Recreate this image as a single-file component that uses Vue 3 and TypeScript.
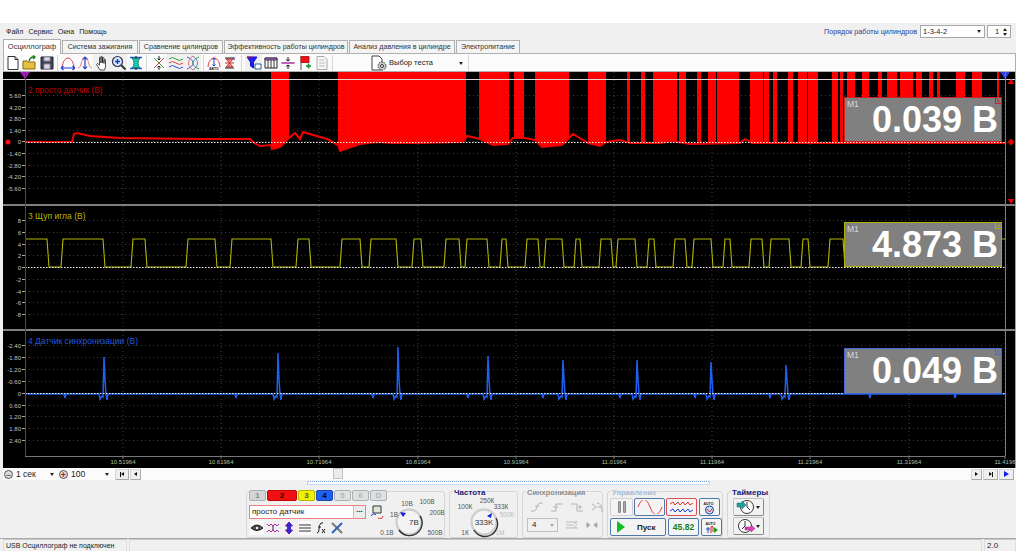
<template>
  <div class="app">
    <div class="topbar">
      <div class="menu">
        <span v-for="m in menuItems" :key="m">{{ m }}</span>
      </div>
      <div class="order">
        <span class="order-label">Порядок работы цилиндров</span>
        <div class="combo order-combo">1-3-4-2<i class="caret"></i></div>
        <div class="spin">1<span class="spin-arrows"><i class="up"></i><i class="caret"></i></span></div>
      </div>
    </div>

    <div class="tabs">
      <div
        v-for="(t, i) in tabs"
        :key="t.name"
        :class="['tab', { active: i === 0 }]"
        :style="{ width: t.w + 'px' }"
      >{{ t.name }}</div>
    </div>

    <div class="toolbar">
      <template v-for="(ic, i) in toolIcons" :key="i">
        <span v-if="ic.sep" class="tool-sep" :style="{ marginRight: (ic.gap ?? 1) + 'px' }"></span>
        <span v-else :class="['tool', { on: ic.on }]">
          <svg width="16" height="16" viewBox="0 0 16 16">
            <path v-for="(s, j) in ic.shapes" :key="j" :d="s[0]" :stroke="s[1]" :fill="s[2] ?? 'none'" :stroke-width="s[3] ?? 1" />
            <text v-if="ic.text" :x="ic.tx ?? 3" :y="ic.ty ?? 15" class="tool-text">{{ ic.text }}</text>
          </svg>
        </span>
      </template>
      <div class="test-select">
        <svg width="18" height="16" viewBox="0 0 18 16">
          <path d="M2 1h7l3 3v11H2z" fill="#fff" stroke="#444" />
          <circle cx="12" cy="11" r="4" fill="#ccc" stroke="#333" stroke-dasharray="1.5 1" />
          <circle cx="12" cy="11" r="1.5" fill="#fff" stroke="#333" />
        </svg>
        <span>Выбор теста</span>
        <i class="caret"></i>
      </div>
    </div>

    <div class="scope">
      <div v-for="p in panes" :key="p.title" class="pane" :style="{ height: p.h + 'px' }">
        <svg class="pane-svg" :width="1013" :height="p.h" :viewBox="`3 ${p.top} 1013 ${p.h}`">
          <g class="grid">
            <line v-for="v in gridX" :key="v" :x1="v" :x2="v" :y1="p.top" :y2="p.top + p.h" />
            <line v-for="t in p.ticks" :key="t.y" x1="25" x2="1005" :y1="t.y" :y2="t.y" />
          </g>
          <g v-if="p.id === 2">
            <path :d="burstPath" fill="#ff0000" />
            <path :d="curvePath" fill="none" stroke="#f00000" stroke-width="2" />
            <line x1="3" x2="1016" y1="79.5" y2="79.5" stroke="#d8d8d8" />
            <circle cx="8" cy="142" r="2.5" fill="#ff1010" />
            <path d="M1011 79l3.5 5h-7zM1011 138.5l3.5 3.5-3.5 3.5-3.5-3.5zM1011 204l3.5-5h-7z" fill="#e80000" />
            <path d="M20 72h10l-5 7z" fill="#9a20b0" />
            <path d="M1000 72h10l-5 7z" fill="#3040e0" />
          </g>
          <path v-if="p.id === 3" :d="yellowPath" fill="none" stroke="#b4b400" stroke-width="1.1" />
          <path v-if="p.id === 4" :d="bluePath" fill="none" stroke="#2060f0" stroke-width="1.5" />
          <line x1="25" x2="1005" :y1="p.zero + 0.5" :y2="p.zero + 0.5" class="zero" />
          <g class="ticks">
            <g v-for="t in p.ticks" :key="t.y">
              <line x1="22" x2="25" :y1="t.y" :y2="t.y" />
              <text x="21" :y="t.y + 2">{{ t.label }}</text>
            </g>
          </g>
          <text x="28" :y="p.top + p.titleY" :class="['pane-title', { short: p.id === 2 }]" :fill="p.titleColor">{{ p.title }}</text>
        </svg>
        <div class="readout" :style="{ borderColor: p.color, height: p.boxH + 'px' }">
          <span class="readout-tag">M1</span>
          <span class="readout-close" :style="{ borderColor: p.color, color: p.color }">×</span>
          <span class="readout-value">{{ p.value }}</span>
        </div>
      </div>
      <div class="cursor cursor-left"></div>
      <div class="cursor cursor-right"></div>
      <svg class="axis" width="1013" height="12" viewBox="3 456 1013 12">
        <line x1="25" x2="1005" y1="456.5" y2="456.5" stroke="#777" />
        <g v-for="(v, i) in gridX" :key="v">
          <line :x1="v" :x2="v" y1="456" y2="459" stroke="#777" />
          <text :x="v" y="464" class="axis-text">{{ timeLabels[i] }}</text>
        </g>
      </svg>
    </div>

    <div class="timerow">
      <div class="scale-left">
        <span class="round-btn">−</span>
        <div class="combo flat w1">1 сек<i class="caret"></i></div>
        <span class="round-btn red">+</span>
        <div class="combo flat w2">100<i class="caret"></i></div>
        <span class="nav"><b class="bar"></b><b class="tri-l"></b></span>
        <span class="nav sm"><b class="tri-l"></b></span>
      </div>
      <div class="thumb"></div>
      <div class="scale-right">
        <span class="nav sm"><b class="tri-r"></b></span>
        <span class="nav md"><b class="tri-r"></b><b class="bar"></b></span>
        <span class="nav md"><b class="tri-r blue"></b></span>
      </div>
    </div>

    <div class="controls">
      <div class="strip"><i></i></div>
      <div class="groups">
        <div class="group g-main">
          <div class="channel-col">
            <div class="channels">
              <span v-for="c in channels" :key="c.name" :class="['ch', c.cls]">{{ c.name }}</span>
            </div>
            <div class="input-row">
              <div class="name-input">просто датчик<span class="dots">...</span></div>
              <svg width="14" height="14" viewBox="0 0 14 14">
                <path d="M3 1h8v7H3z" fill="#dfe8d8" stroke="#333" />
                <path d="M1 11a3 3 0 0 1 5-1" stroke="#2040e0" fill="none" />
                <path d="M13 11a3 3 0 0 1-5 2" stroke="#e02020" fill="none" />
              </svg>
            </div>
            <div class="icon-row">
              <span v-for="(ic, i) in channelIcons" :key="i" :class="['mini', { on: ic.on }]">
                <svg width="14" height="14" viewBox="0 0 14 14">
                  <path v-for="(s, j) in ic.shapes" :key="j" :d="s[0]" :stroke="s[1]" :fill="s[2] ?? 'none'" :stroke-width="s[3] ?? 1" />
                </svg>
              </span>
            </div>
          </div>
          <svg class="dial" width="59" height="47" viewBox="386 490 59 47">
            <circle cx="408" cy="520" r="12.5" fill="#f4f4f4" stroke="#cfcfcf" stroke-width="2.4" />
            <path d="M398 528A12.5 12.5 0 0 0 419 514" fill="none" stroke="#333" stroke-width="1.4" />
            <path d="M399 510l6 1-3 4z" fill="#1020e0" />
            <text v-for="l in voltLabels" :key="l[0]" :x="l[1]" :y="l[2]" class="dial-text">{{ l[0] }}</text>
            <text x="413" y="523" class="dial-center">7В</text>
          </svg>
        </div>

        <div class="group g-freq">
          <span class="group-title navy">Частота</span>
          <svg class="dial" width="69" height="47" viewBox="449 490 69 47">
            <circle cx="483" cy="520" r="12.5" fill="#f4f4f4" stroke="#cfcfcf" stroke-width="2.4" />
            <path d="M473 528A12.5 12.5 0 0 0 495 516" fill="none" stroke="#333" stroke-width="1.4" />
            <path d="M491 511l-5 3 4 2z" fill="#1020e0" />
            <text v-for="l in freqLabels" :key="l[0]" :x="l[1]" :y="l[2]" :class="['dial-text', { dim: l[3] }]">{{ l[0] }}</text>
            <text x="483" y="523" class="dial-center">333K</text>
          </svg>
        </div>

        <div class="group g-sync">
          <span class="group-title gray">Синхронизация</span>
          <div class="sync-grid">
            <svg v-for="(d, i) in syncTop" :key="i" width="14" height="12" viewBox="0 0 14 12">
              <path :d="d" stroke="#b4b4b4" fill="none" />
            </svg>
          </div>
          <div class="sync-row">
            <div class="combo sync-combo">4<i class="caret light"></i></div>
            <svg width="14" height="12" viewBox="0 0 14 12"><path d="M1 3h12M1 6h8M1 9h12M9 3l3 3-3 3" stroke="#bbb" fill="none" /></svg>
            <svg width="14" height="12" viewBox="0 0 14 12"><path d="M1 6h4M9 6h4M5 6l-3-2.5v5zM9 6l3-2.5v5z" stroke="#aaa" fill="#aaa" /></svg>
          </div>
        </div>

        <div class="group g-control">
          <span class="group-title pale">Управление</span>
          <div class="control-grid">
            <span class="cbtn w-pause"><i class="pause"></i><i class="pause"></i></span>
            <span class="cbtn w-mid blue-b">
              <svg width="26" height="14" viewBox="0 0 26 14"><path d="M1 7C5 -3 9 -3 13 7S21 17 25 7" fill="none" stroke="#e03030" /></svg>
            </span>
            <span class="cbtn w-mid red-b">
              <svg width="26" height="14" viewBox="0 0 26 14">
                <path d="M1 4l3-2 2 3 3-3 2 3 3-3 2 3 3-3 2 3 3-2" fill="none" stroke="#e03030" />
                <path d="M1 11l3-2 2 3 3-3 2 3 3-3 2 3 3-3 2 3 3-2" fill="none" stroke="#2040e0" />
              </svg>
            </span>
            <span class="cbtn w-small blue-b">
              <svg width="15" height="15" viewBox="0 0 15 15">
                <text x="1.5" y="4.5" class="tool-text">AUTO</text>
                <circle cx="7.5" cy="10" r="4" fill="#cfe0f0" stroke="#2040a0" />
                <path d="M5 9l2.5 3 2.5-3" stroke="#d02020" fill="none" />
              </svg>
            </span>
            <span class="cbtn w-run blue-b">
              <i class="play"></i><b class="run-label">Пуск</b>
            </span>
            <span class="cbtn w-mid blue-b"><b class="fps">45.82</b></span>
            <span class="cbtn w-small blue-b">
              <svg width="15" height="15" viewBox="0 0 15 15">
                <text x="1.5" y="4.5" class="tool-text">AUTO</text>
                <path d="M2 9h4M4 7v6" stroke="#2040e0" />
                <path d="M7 13V7q2-2 2 1v4" stroke="#d02020" fill="none" />
                <path d="M10 7l4 3-4 3z" fill="#20a020" />
              </svg>
            </span>
          </div>
        </div>

        <div class="group g-timers">
          <span class="group-title navy">Таймеры</span>
          <span class="timer-btn">
            <svg width="20" height="16" viewBox="0 0 20 16">
              <circle cx="11" cy="8" r="6.5" fill="#fff" stroke="#333" />
              <path d="M11 3v5l3 3" stroke="#333" fill="none" />
              <path d="M1 4h5V2l4 4-4 4V8H1z" fill="#20a0a0" stroke="#106060" stroke-width=".5" />
            </svg>
            <i class="caret"></i>
          </span>
          <span class="timer-btn">
            <svg width="20" height="16" viewBox="0 0 20 16">
              <circle cx="9" cy="8" r="6.5" fill="#fff" stroke="#333" />
              <path d="M9 3v5l-3 3" stroke="#333" fill="none" />
              <path d="M9 9h6V7l4 3.5-4 3.5v-2H9z" fill="#e040c0" stroke="#802070" stroke-width=".5" />
            </svg>
            <i class="caret"></i>
          </span>
        </div>
      </div>
    </div>

    <div class="status">
      <div class="cell c1">USB Осциллограф не подключен</div>
      <div class="cell c2"></div>
      <div class="cell c3">2.0</div>
    </div>
  </div>
</template>

<script setup lang="ts">
import { computed } from 'vue'

type Shape = [string, string, string?, number?]
interface Ico {
  sep?: boolean
  gap?: number
  on?: boolean
  shapes?: Shape[]
  text?: string
  tx?: number
  ty?: number
}

const menuItems = ['Файл', 'Сервис', 'Окна', 'Помощь']

const tabs = [
  { name: 'Осциллограф', w: 58 },
  { name: 'Система зажигания', w: 76 },
  { name: 'Сравнение цилиндров', w: 84 },
  { name: 'Эффективность работы цилиндров', w: 124 },
  { name: 'Анализ давления в цилиндре', w: 106 },
  { name: 'Электропитание', w: 64 }
]

const toolIcons: Ico[] = [
  { shapes: [['M3 1.5h7l3 3v10H3z', '#333', '#fff'], ['M10 1.5v3h3', '#333']] },
  { shapes: [['M1 14V6h4l1 1h7v7z', '#8a6a10', '#e8c040'], ['M7 6q2-5 6-4M11 .5l2 1.5-2 2', '#208020', 'none', 1.5]] },
  { shapes: [['M2 2h12v12H2z', '#223', '#445'], ['M5 2h6v4H5z', '#889', '#dde'], ['M5 9h6v5H5z', '#889', '#dde']] },
  { sep: true },
  { shapes: [['M2 12C4 0 12 0 14 12', '#e04040'], ['M1 13h14M1 13l2.5-2M1 13l2.5 2M15 13l-2.5-2M15 13l-2.5 2', '#2040d0', 'none', 1.2]] },
  { shapes: [['M1 13C5 13 4 2 8 2s3 11 7 11', '#e08080'], ['M8 2v12M8 2L6 4.5M8 2l2 2.5M8 14l-2-2.5M8 14l2-2.5', '#2040d0', 'none', 1.2]] },
  { on: true, shapes: [['M6 15L2.5 9.5l1-1 2 1.5V2.5a.8.8 0 0 1 1.5 0V8V2a.8.8 0 0 1 1.5 0v6V3a.8.8 0 0 1 1.5 0v5.5V5a.8.8 0 0 1 1.5 0v7l-1 3z', '#222', '#fff', .8]] },
  { on: true, shapes: [['M10 10l4.5 4.5', '#333', 'none', 2], ['M6.5 1.5a5 5 0 1 1 0 10a5 5 0 1 1 0-10z', '#335', '#d8e8f8', 1.2], ['M4 6.5h5M6.5 4v5', '#1040c0', 'none', 1.5]] },
  { shapes: [['M2 2.5h12M2 13.5h12', '#3050e0', 'none', 1.5], ['M4 3q4 5 0 10h8q-4-5 0-10z', '#108070', '#20c8b0'], ['M8 1v3M8 12v3', '#222']] },
  { sep: true, gap: 3 },
  { shapes: [['M3 3l10 10', '#30a030'], ['M13 3L3 13', '#e04040'], ['M8 1v4M6.5 3.5L8 5l1.5-1.5M8 15v-4M6.5 12.5L8 11l1.5 1.5', '#222']] },
  { on: true, shapes: [['M1 4q3.5-3 7 0t7 0', '#30a030'], ['M1 8q3.5-3 7 0t7 0', '#e04040'], ['M1 12q3.5-3 7 0t7 0', '#3050e0']] },
  { on: true, shapes: [['M2 2c8 3 8 9 0 12', '#3050e0'], ['M14 2C6 5 6 11 14 14', '#30a030'], ['M8 1c-6 4-6 10 0 14', '#e04040', 'none', .7], ['M8 1c6 4 6 10 0 14', '#3050e0', 'none', .7]] },
  { sep: true },
  { shapes: [['M2 12C3 0 13 0 14 12', '#e04040'], ['M8 3v8M6.5 4.5L8 3l1.5 1.5M6.5 9.5L8 11l1.5-1.5', '#2040d0']], text: 'АВТО', tx: 3, ty: 15 },
  { shapes: [['M2 8h9M3 4h7L6.5 8 10 12H3l3.5-4z', '#c03030', '#e88'], ['M2 3h9M2 13h9', '#222']], text: '0', tx: 10, ty: 5 },
  { sep: true, gap: 3 },
  { on: true, shapes: [['M1 2h10L7.5 7v6L4.5 11V7z', '#1010d0', '#2020f0'], ['M9 9h6v5H9z', '#2060a0', '#fff'], ['M1 2h5', '#e02020']] },
  { shapes: [['M2 3h12v10H2z', '#222', '#fff'], ['M2 3h12v2H2z', '#604080', '#806090'], ['M5 5v8M8 5v8M11 5v8', '#333']] },
  { shapes: [['M1.5 8h13', '#a020a0', 'none', 1.4], ['M8 2v4M6 4.5L8 6l2-1.5M8 14v-4M6 11.5L8 10l2 1.5', '#222']] },
  { shapes: [['M4 1v14', '#555'], ['M4 1.5h8v6H4z', '#b02020', '#f01010'], ['M9 11h5M11.5 8.5v5', '#109030', 'none', 1.6]] },
  { shapes: [['M3 1.5h7l3 3v10H3z', '#aaa', '#f8f8f8'], ['M5 5h5M5 8h6M5 11h6', '#bbb', 'none']] },
  { sep: true }
]

const channelIcons: Ico[] = [
  { on: true, shapes: [['M1 7q6-6 12 0q-6 5-12 0z', '#222', '#555'], ['M7 5a2 2 0 1 1 0 4a2 2 0 1 1 0-4z', '#222', '#eee']] },
  { shapes: [['M1 3l2 2 2-2 2 2 2-2 2 2 2-2', '#b020a0'], ['M1 11l2-2 2 2 2-2 2 2 2-2 2 2', '#b020a0'], ['M7 5v4', '#222']] },
  { shapes: [['M7 1l3.5 4H8.5v4H10.5L7 13 3.5 9H5.5V5H3.5z', '#7010a0', '#2030e0']] },
  { on: true, shapes: [['M1 4h12M1 7h12M1 10h12', '#333']] },
  { shapes: [['M3 12q2 0 2-4t2-6h2M4 6h3M8 8l3 4M11 8l-3 4', '#222']] },
  { shapes: [['M2 2l10 10', '#777', 'none', 2], ['M12 2L2 12', '#3060c0', 'none', 2]] }
]

const channels = [
  { name: '1', cls: 'gray1' },
  { name: '2', cls: 'red' },
  { name: '3', cls: 'yellow' },
  { name: '4', cls: 'blue' },
  { name: '5', cls: 'off' },
  { name: '6', cls: 'off' },
  { name: 'D', cls: 'off' }
]

const voltLabels: [string, number, number][] = [
  ['10В', 406, 504],
  ['100В', 426, 502],
  ['1В', 393, 515],
  ['200В', 436, 513],
  ['0.1В', 386, 533],
  ['500В', 434, 533]
]

const freqLabels: [string, number, number, boolean?][] = [
  ['250К', 486, 501],
  ['100К', 464, 507],
  ['333К', 500, 507],
  ['500К', 506, 515, true],
  ['1К', 464, 533],
  ['1М', 499, 533, true]
]

const syncTop = [
  'M1 10h3q2 0 3-4t3-4h3M5 5h4',
  'M1 10h5V3h7M3 6h5',
  'M1 3h6v7h6M8 6h4M10 4v4',
  'M2 3l4 3-4 3M7 2q5 0 5 9M7 6h4'
]

// screen coordinates of everything on the scope
const gridX = Array.from({ length: 10 }, (_, i) => 123 + i * 98.2).map((v) => Math.round(v))
gridX[9] = 1005

const timeLabels = ['10.51964', '10.61964', '10.71964', '10.81964', '10.91964', '11.01964', '11.11964', '11.21964', '11.31964', '11.4196']

const mkTicks = (labels: string[], first: number, step: number) =>
  labels.map((label, i) => ({ label, y: Math.round(first + i * step) + 0.5 }))

const panes = [
  {
    id: 2, top: 72, h: 132, zero: 142, titleY: 21, boxH: 45,
    title: '2 просто датчик (В)', titleColor: '#c40000', color: '#d02020', value: '0.039 В',
    ticks: mkTicks(['5.60', '4.20', '2.80', '1.40', '0', '-1.40', '-2.80', '-4.20', '-5.60'], 95, 11.6)
  },
  {
    id: 3, top: 206, h: 123, zero: 267, titleY: 13, boxH: 45,
    title: '3 Щуп игла (В)', titleColor: '#b8b800', color: '#b0b000', value: '4.873 В',
    ticks: mkTicks(['8', '6', '4', '2', '0', '-2', '-4', '-6', '-8'], 220, 11.75)
  },
  {
    id: 4, top: 331, h: 125, zero: 393, titleY: 13, boxH: 46,
    title: '4 Датчик синхронизации (В)', titleColor: '#2458d8', color: '#4468e0', value: '0.049 В',
    ticks: mkTicks(['-2.40', '-1.80', '-1.20', '-0.60', '0', '0.60', '1.20', '1.80', '2.40'], 345, 11.9)
  }
]

const curve: [number, number][] = [
  [25, 142], [72, 142], [74, 134], [77, 133], [90, 136], [120, 138], [200, 139], [250, 139], [254, 143],
  [260, 146], [271, 145], [272, 149], [280, 147], [289, 138], [295, 133], [300, 139], [303, 132], [327, 139],
  [338, 145], [340, 151], [348, 148], [360, 144], [377, 142], [393, 143], [417, 143], [463, 142], [467, 136],
  [480, 139], [493, 145], [508, 144], [513, 138], [525, 138], [535, 140], [542, 147], [562, 145], [573, 134],
  [588, 143], [600, 146], [606, 142], [620, 140], [630, 143], [660, 143], [672, 141], [690, 144], [740, 143],
  [745, 139], [752, 143], [1005, 143]
]

const curveAt = (x: number): number => {
  for (let i = 1; i < curve.length; i++) {
    if (x <= curve[i][0]) {
      const [x0, y0] = curve[i - 1]
      const [x1, y1] = curve[i]
      return y0 + ((y1 - y0) * (x - x0)) / (x1 - x0)
    }
  }
  return 143
}

const bursts: [number, number][] = [
  [271, 289], [338, 466], [479, 509], [514, 524], [535, 569], [588, 606], [627, 630], [641, 645], [653, 677],
  [679, 686], [697, 701], [708, 716], [717, 739], [750, 763], [764, 769], [773, 777], [788, 793], [798, 807],
  [808, 818], [832, 838], [840, 843], [847, 855], [862, 869], [878, 882], [887, 897], [900, 913], [916, 922],
  [929, 933], [937, 940], [956, 965], [972, 982], [997, 999]
]

const burstPath = computed(() =>
  bursts
    .map(([a, b]) => {
      let d = `M${a} 72L${b} 72`
      for (let x = b; x >= a; x -= 2) d += `L${x} ${curveAt(x).toFixed(1)}`
      return d + `L${a} ${curveAt(a).toFixed(1)}Z`
    })
    .join('')
)

const curvePath = computed(() => 'M' + curve.map((p) => p.join(' ')).join('L'))

const highs: [number, number][] = [
  [25, 48], [62, 104], [132, 146], [187, 216], [231, 272], [297, 310], [341, 361], [370, 397], [413, 422],
  [445, 460], [466, 488], [501, 507], [526, 539], [545, 563], [575, 581], [600, 612], [617, 636], [648, 655],
  [674, 686], [693, 712], [724, 731], [750, 763], [770, 790], [802, 809], [829, 844]
]

const yellowPath = computed(() => {
  let d = 'M25 239'
  highs.forEach(([a, b], i) => {
    if (i > 0) d += `L${a - 1} 267L${a + 1} 239`
    d += `L${b - 1} 239L${b + 1} 267`
  })
  return d + 'L844 267M1002 239L1005 239'
})

const spikes: [number, number][] = [
  [104, 357], [278, 353], [398, 347], [488, 356], [563, 360], [637, 360], [711, 362], [786, 365]
]
const dips = [65, 236, 373, 468, 543, 620, 695, 770, 870, 955]

const bluePath = computed(() => {
  const parts = [
    ...spikes.map(([x, top]) => ({
      x,
      d: `L${x - 5} 394L${x - 4} 399L${x - 2} 396L${x - 1} 397L${x} ${top}L${x + 1} 380L${x + 2} 394L${x + 3} 400L${x + 4} 394`
    })),
    ...dips.map((x) => ({ x, d: `L${x - 1} 394L${x} 398L${x + 1} 394` }))
  ].sort((a, b) => a.x - b.x)
  return 'M25 394' + parts.map((p) => p.d).join('') + 'L1005 394'
})
</script>

<style>
html,
body {
  background: #fff;
  overflow: hidden;
}
</style>

<style scoped>
.app {
  width: 1016px;
  height: 528px;
  margin-top: 23px;
  display: flex;
  flex-direction: column;
  background: #f0f0f0;
  font-family: "Liberation Sans", Arial, sans-serif;
  font-size: 7.5px;
  color: #222;
  overflow: hidden;
}

.topbar {
  height: 16px;
  box-sizing: border-box;
  display: flex;
  justify-content: space-between;
  align-items: center;
  padding: 1px 5px 0 6px;
  flex: none;
}

.menu {
  display: flex;
  gap: 5px;
  font-size: 7.1px;
}

.order {
  display: flex;
  align-items: center;
  gap: 2px;
}

.order-label {
  color: #2c3f90;
  font-size: 7.2px;
  margin-right: 1px;
}

.combo {
  position: relative;
  background: #fff;
  border: 1px solid #a8a8a8;
  height: 13px;
  line-height: 11px;
  padding-left: 2px;
  box-sizing: border-box;
}

.order-combo {
  width: 65px;
}

.caret {
  position: absolute;
  right: 3px;
  top: 4px;
  border: 2.5px solid transparent;
  border-top: 3px solid #222;
  border-bottom: 0;
}

.caret.light {
  border-top-color: #aaa;
}

.spin {
  position: relative;
  width: 24px;
  height: 13px;
  line-height: 11px;
  padding-left: 7px;
  box-sizing: border-box;
  background: #fff;
  border: 1px solid #a8a8a8;
}

.spin-arrows .up {
  position: absolute;
  right: 3px;
  top: 1.5px;
  border: 2.5px solid transparent;
  border-bottom: 3px solid #222;
  border-top: 0;
}

.spin-arrows .caret {
  top: 6.5px;
}

.tabs {
  height: 14px;
  display: flex;
  align-items: flex-end;
  gap: 1px;
  padding-left: 3px;
  flex: none;
}

.tab {
  height: 13px;
  box-sizing: border-box;
  border: 1px solid #b0b0b0;
  border-bottom: 0;
  background: #f4f4f4;
  text-align: center;
  line-height: 12px;
  font-size: 7.1px;
  color: #333;
  white-space: nowrap;
  overflow: hidden;
}

.tab.active {
  height: 15px;
  background: #fff;
  margin-bottom: -1px;
  line-height: 13px;
  font-size: 7.5px;
  position: relative;
  z-index: 1;
}

.toolbar {
  height: 19px;
  margin-left: 3px;
  box-sizing: border-box;
  border: 1px solid #b0b0b0;
  background: #fbfbfb;
  display: flex;
  align-items: center;
  flex: none;
}

.tool {
  width: 17px;
  height: 17px;
  display: flex;
  align-items: center;
  justify-content: center;
  flex: none;
}

.tool.on {
  background: #f0f0f0;
}

.tool-sep {
  width: 1px;
  height: 16px;
  margin-left: 2px;
  background: #d6d6d6;
  flex: none;
}

.tool-text {
  font-size: 3.5px;
  font-weight: 700;
  fill: #222;
}

.test-select {
  position: relative;
  width: 98px;
  height: 16px;
  margin-left: 36px;
  display: flex;
  align-items: center;
  gap: 1px;
  font-size: 7.5px;
  border-right: 1px solid #d6d6d6;
}

.test-select .caret {
  right: 5px;
  top: 7px;
}

.scope {
  position: relative;
  height: 396px;
  margin-left: 3px;
  background: #000;
  border-right: 1px solid #a0a0a0;
  overflow: hidden;
  flex: none;
}

.pane {
  position: relative;
  overflow: hidden;
  border-bottom: 2px solid #808080;
}

.pane:nth-of-type(3) {
  border-bottom: 0;
}

.pane-svg {
  display: block;
}

.grid line {
  stroke: #3c3c3c;
  stroke-dasharray: 1 3;
}

.zero {
  stroke: #eee;
  stroke-dasharray: 1.5 1.5;
}

.ticks line {
  stroke: #aaa;
}

.ticks text {
  font-size: 6px;
  fill: #c4c4c4;
  text-anchor: end;
}

.pane-title {
  font-size: 8.5px;
}

.pane-title.short {
  font-size: 8.3px;
}

.readout {
  position: absolute;
  right: 13px;
  bottom: 62px;
  width: 158px;
  box-sizing: border-box;
  border: 1px solid;
  background: #808080;
  color: #fff;
  text-align: right;
}

.readout-tag {
  position: absolute;
  left: 2px;
  top: 1px;
  font-size: 8.5px;
  color: #d8d8d8;
}

.readout-close {
  position: absolute;
  right: -1px;
  top: -1px;
  width: 7px;
  height: 7px;
  box-sizing: border-box;
  border: 1px solid;
  font-size: 7px;
  line-height: 5px;
  text-align: center;
}

.readout-value {
  display: block;
  font-size: 36px;
  font-weight: 700;
  line-height: 44px;
  padding-right: 3px;
  white-space: nowrap;
}

.cursor {
  position: absolute;
  top: 0;
  height: 384px;
  width: 1px;
}

.cursor-left {
  left: 22px;
  background: #6e2e78;
}

.cursor-right {
  left: 1002px;
  background: #6074e8;
}

.axis {
  display: block;
}

.axis-text {
  font-size: 6px;
  fill: #a8c0a8;
  text-anchor: middle;
}

.timerow {
  position: relative;
  height: 12px;
  margin-left: 3px;
  background: #fbfbfb;
  display: flex;
  justify-content: space-between;
  align-items: center;
  flex: none;
}

.scale-left,
.scale-right {
  display: flex;
  align-items: center;
}

.round-btn {
  width: 9px;
  height: 9px;
  border-radius: 50%;
  border: 1px solid #555;
  background: #ddd;
  font-size: 9px;
  line-height: 8px;
  text-align: center;
  box-sizing: border-box;
  margin: 0 1px;
}

.round-btn.red {
  color: #d01010;
  font-weight: 700;
  margin-left: 5px;
}

.flat {
  border: 0;
  background: transparent;
  font-size: 8.5px;
  line-height: 12px;
  height: 12px;
}

.w1 {
  width: 40px;
}

.w2 {
  width: 45px;
}

.flat .caret {
  top: 5px;
  right: 0;
}

.w2 .caret {
  right: 5px;
}

.nav {
  width: 14px;
  height: 11px;
  margin-left: 1px;
  display: inline-flex;
  align-items: center;
  justify-content: center;
  background: #efefef;
  border: 1px solid #d8d8d8;
  border-right-color: #aaa;
  border-bottom-color: #aaa;
  box-sizing: border-box;
}

.nav.sm {
  width: 11px;
}

.nav.md {
  width: 15px;
}

.bar {
  width: 1px;
  height: 5px;
  background: #111;
}

.tri-l {
  border: 2.5px solid transparent;
  border-right: 3px solid #111;
  border-left: 0;
}

.tri-r {
  border: 2.5px solid transparent;
  border-left: 3px solid #111;
  border-right: 0;
}

.tri-r.blue {
  border-width: 3.5px;
  border-left: 5px solid #1020f0;
  border-right: 0;
}

.thumb {
  position: absolute;
  left: 330px;
  top: 0;
  width: 10px;
  height: 11px;
  border: 1px solid #c0c0c0;
  background: #ececec;
  box-sizing: border-box;
}

.scale-right {
  margin-right: 2px;
}

.controls {
  height: 58px;
  flex: none;
  padding-left: 246px;
  box-sizing: border-box;
}

.strip {
  width: 403px;
  height: 4px;
  margin-left: 61px;
  box-sizing: border-box;
  border: 1px solid #c8d8ec;
  border-top: 0;
  background: #fafcff;
}

.strip i {
  display: block;
  height: 1px;
  margin-top: 1px;
  border-top: 1px dotted #7ca6d8;
}

.groups {
  display: flex;
  gap: 4px;
  margin-top: 6px;
}

.group {
  position: relative;
  height: 47px;
  box-sizing: border-box;
  border: 1px solid #d6d6d6;
  border-radius: 3px;
  flex: none;
}

.group-title {
  position: absolute;
  left: 3px;
  top: -3px;
  padding: 0 1px;
  background: #f0f0f0;
  font-weight: 700;
  font-size: 7.5px;
  line-height: 8px;
  white-space: nowrap;
}

.navy {
  color: #15207a;
  font-size: 8px;
}

.gray {
  color: #8c8c8c;
}

.pale {
  color: #a8b8d8;
}

.g-main {
  width: 199px;
  display: flex;
  padding-left: 2px;
}

.channel-col {
  width: 138px;
  flex: none;
}

.channels {
  display: flex;
  gap: 1px;
  margin-top: -2px;
  height: 11px;
}

.ch {
  width: 17px;
  height: 11px;
  box-sizing: border-box;
  border: 1px solid #a8b0b8;
  border-radius: 2px;
  text-align: center;
  font-size: 8px;
  line-height: 9px;
  font-weight: 700;
  color: #888;
  background: #d4d4d4;
}

.ch.red {
  width: 30px;
  background: #ee1111;
  color: #300;
  border-color: #c00;
}

.ch.yellow {
  width: 17px;
  background: #f0f000;
  color: #555;
  border-color: #b8b800;
}

.ch.blue {
  background: #2060f0;
  color: #002;
  border-color: #1848b0;
}

.ch.off {
  background: #e0e0e0;
  color: #b4b4b4;
}

.input-row {
  display: flex;
  align-items: center;
  gap: 4px;
  margin-top: 4px;
}

.name-input {
  position: relative;
  width: 117px;
  height: 14px;
  box-sizing: border-box;
  border: 1px solid #ee8080;
  background: #fff;
  font-size: 8px;
  line-height: 12px;
  padding-left: 2px;
  color: #222;
}

.dots {
  position: absolute;
  right: 0;
  top: 0;
  width: 11px;
  height: 12px;
  background: #ececec;
  border-left: 1px solid #c0c0c0;
  text-align: center;
  font-weight: 700;
  line-height: 8px;
}

.icon-row {
  display: flex;
  margin-top: 2px;
  gap: 2px;
  padding-left: 1px;
}

.mini {
  width: 14px;
  height: 14px;
  display: inline-flex;
}

.mini.on {
  background: #fafafa;
}

.dial {
  display: block;
  overflow: visible;
  flex: none;
}

.dial-text {
  font-size: 6.5px;
  fill: #555;
  text-anchor: middle;
}

.dial-text.dim {
  fill: #bdbdbd;
}

.dial-center {
  font-size: 8px;
  fill: #333;
  text-anchor: middle;
}

.g-freq {
  width: 69px;
}

.g-sync {
  width: 81px;
  padding: 9px 3px 0 4px;
}

.sync-grid {
  display: grid;
  grid-template-columns: 14px 14px 14px 14px;
  column-gap: 6px;
  padding-left: 3px;
}

.sync-row {
  display: flex;
  align-items: center;
  gap: 7px;
  margin-top: 5px;
}

.sync-combo {
  width: 31px;
  height: 14px;
  border-color: #c0c0c0;
  background: #f0f0f0;
  font-size: 8px;
  line-height: 12px;
  padding-left: 4px;
}

.sync-combo .caret {
  top: 5px;
}

.g-control {
  width: 116px;
  padding: 6px 0 0 2px;
}

.control-grid {
  display: flex;
  flex-wrap: wrap;
  gap: 2px 1px;
}

.cbtn {
  height: 18px;
  box-sizing: border-box;
  display: inline-flex;
  align-items: center;
  justify-content: center;
  border: 1px solid #d0d0d0;
  border-radius: 2px;
  background: #f4f4f4;
  gap: 2px;
}

.blue-b {
  border-color: #5078a8;
}

.red-b {
  border-color: #e05050;
}

.w-pause {
  width: 23px;
}

.w-mid {
  width: 31px;
}

.w-small {
  width: 21px;
  margin-left: 1px;
}

.w-run {
  width: 56px;
  justify-content: flex-start;
  padding-left: 6px;
  gap: 12px;
  margin-right: 1px;
}

.pause {
  width: 3px;
  height: 12px;
  background: #aaa;
  border: 1px solid #888;
  box-sizing: border-box;
  border-radius: 1px;
}

.play {
  border: 6px solid transparent;
  border-left: 8px solid #10c020;
  border-right: 0;
}

.run-label {
  font-size: 8px;
  color: #222;
}

.fps {
  font-size: 8.5px;
  color: #108020;
}

.g-timers {
  width: 43px;
  padding: 6px 0 0 5px;
  display: flex;
  flex-direction: column;
  gap: 1px;
}

.timer-btn {
  position: relative;
  width: 31px;
  height: 18px;
  box-sizing: border-box;
  border: 1px solid #c0c0c0;
  border-bottom-color: #888;
  border-right-color: #888;
  border-radius: 2px;
  background: #f2f2f2;
  display: flex;
  align-items: center;
  padding-left: 2px;
}

.timer-btn .caret {
  top: 7px;
}

.status {
  height: 13px;
  border-top: 1px solid #a8a8a8;
  display: flex;
  gap: 2px;
  padding-left: 3px;
  flex: none;
}

.cell {
  box-sizing: border-box;
  border: 1px solid #dcdcdc;
  border-top-color: #c8c8c8;
  font-size: 7px;
  line-height: 12px;
  padding-left: 2px;
  white-space: nowrap;
}

.c1 {
  width: 124px;
}

.c2 {
  width: 854px;
}

.c3 {
  width: 32px;
  font-size: 8px;
}
</style>
